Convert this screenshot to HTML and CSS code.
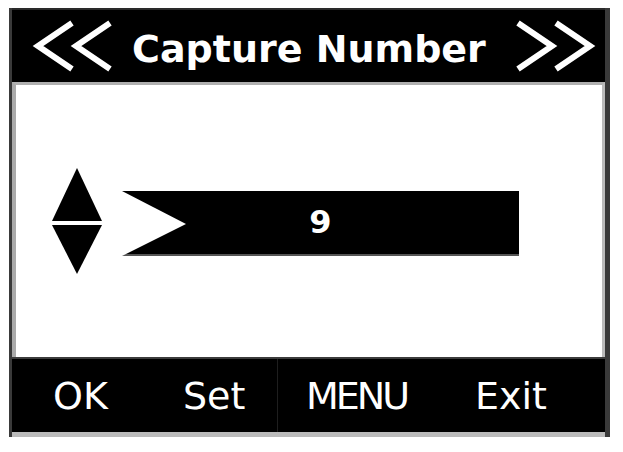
FILE: index.html
```html
<!DOCTYPE html>
<html>
<head>
<meta charset="utf-8">
<link rel="stylesheet" href="styles.css">
</head>
<body>
<div class="screen">
  <div class="header">
    <svg class="chev chev-left" width="82" height="52" viewBox="0 0 82 52">
      <polyline points="40,3 6,26 40,49" fill="none" stroke="#fff" stroke-width="6"/>
      <polyline points="78,3 44,26 78,49" fill="none" stroke="#fff" stroke-width="6"/>
    </svg>
    <span class="title">Capture Number</span>
    <svg class="chev chev-right" width="82" height="52" viewBox="0 0 82 52">
      <polyline points="4,3 38,26 4,49" fill="none" stroke="#fff" stroke-width="6"/>
      <polyline points="42,3 76,26 42,49" fill="none" stroke="#fff" stroke-width="6"/>
    </svg>
  </div>
  <div class="body">
    <div class="row">
      <svg class="updown" width="50" height="106" viewBox="0 0 50 106">
        <polygon points="25,0 50,53 0,53" fill="#000"/>
        <polygon points="0,57 50,57 25,106" fill="#000"/>
      </svg>
      <div class="bar">
        <svg class="notch" width="64" height="65" viewBox="0 0 64 65">
          <polygon points="0,0 64,33 0,65" fill="#fff"/>
        </svg>
        <span class="value">9</span>
      </div>
    </div>
  </div>
  <div class="footer">
    <div class="cell cell-ok">OK</div>
    <div class="cell cell-set">Set</div>
    <div class="cell cell-menu">MENU</div>
    <div class="cell cell-exit">Exit</div>
  </div>
</div>
</body>
</html>
```
FILE: styles.css
```css
html, body {
  margin: 0;
  padding: 0;
  background: #fff;
}
body {
  padding: 8px 0 0 9px;
  font-family: "DejaVu Sans", "Open Sans", sans-serif;
}
.screen {
  width: 593px;
  border-left: 3px solid #3a3a3a;
  border-right: 5px solid #3a3a3a;
  display: flex;
  flex-direction: column;
}
.header {
  height: 72px;
  background: #000;
  border-top: 2px solid #2a2a2a;
  display: flex;
  align-items: center;
  color: #fff;
}
.chev-left {
  margin-left: 20px;
}
.title {
  margin-left: 18px;
  font-weight: 700;
  font-size: 38px;
  line-height: 1;
  padding-top: 6px;
}
.chev-right {
  margin-left: auto;
  margin-right: 9px;
}
.body {
  height: 272px;
  background: #fff;
  border-top: 3px solid #b0b0b0;
  border-left: 4px solid #aaa;
  border-right: 3px solid #bbb;
  display: flex;
  align-items: center;
}
.row {
  display: flex;
  align-items: center;
  gap: 20px;
  margin-left: 36px;
}
.updown {
  display: block;
}
.bar {
  position: relative;
  width: 397px;
  height: 63px;
  background: #000;
  border-bottom: 2px solid #555;
  display: flex;
  align-items: center;
  justify-content: center;
  margin-top: 4px;
}
.notch {
  position: absolute;
  left: 0;
  top: 0;
}
.value {
  color: #fff;
  font-weight: 700;
  font-size: 32px;
  line-height: 1;
}
.footer {
  height: 73px;
  background: #000;
  border-top: 2px solid #3c3c3c;
  border-bottom: 5px solid #bbb;
  display: flex;
  align-items: center;
  color: #fff;
  font-size: 38px;
}
.cell {
  height: 100%;
  display: flex;
  align-items: center;
  line-height: 1;
}
.cell-ok {
  width: 89px;
  padding-left: 41px;
}
.cell-set {
  width: 94px;
  padding-left: 41px;
}
.cell-menu {
  width: 134px;
  padding-left: 28px;
  border-left: 1px solid #1e1e1e;
  letter-spacing: -3px;
}
.cell-exit {
  width: 127px;
  padding-left: 35px;
}
```
